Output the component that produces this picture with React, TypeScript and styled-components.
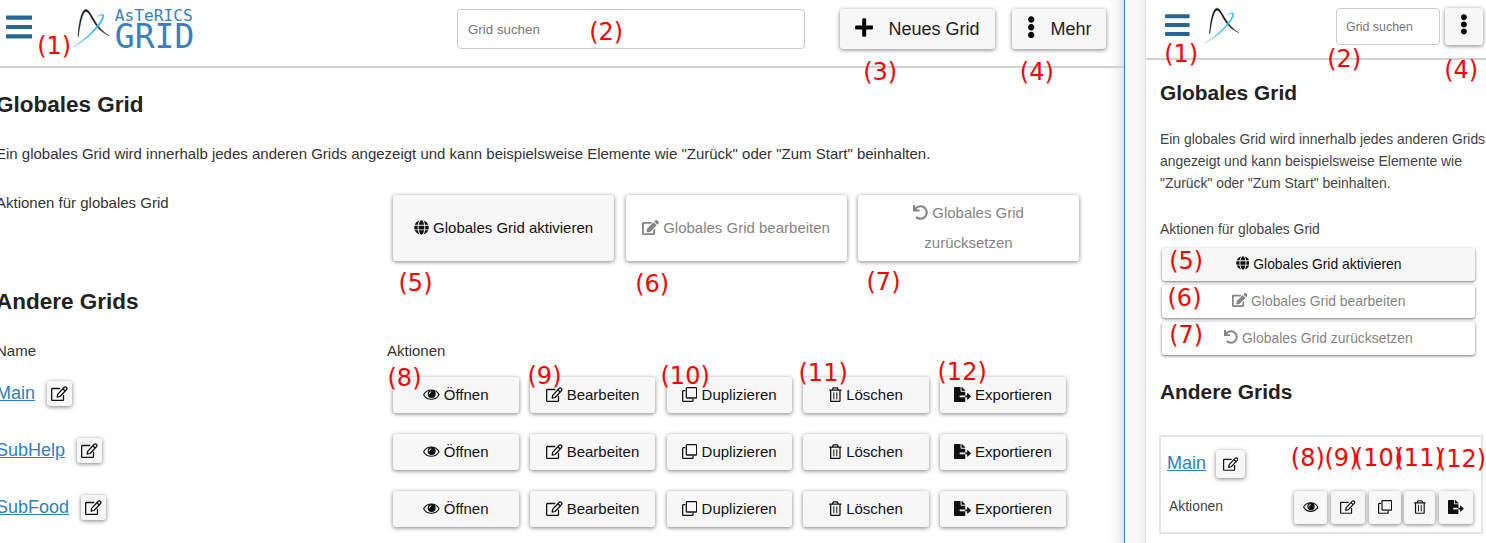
import React from "react";
import styled, { createGlobalStyle } from "styled-components";
import {
  FaBars,
  FaEdit,
  FaEllipsisV,
  FaFileExport,
  FaGlobe,
  FaPlus,
  FaUndo,
} from "react-icons/fa";

const GlobalStyle = createGlobalStyle`
  * { box-sizing: border-box; }
  body {
    margin: 0;
    background: #fff;
    color: #222;
    font-family: "Liberation Sans", Arial, sans-serif;
    overflow: hidden;
  }
`;

const Page = styled.div`
  position: relative;
  display: flex;
  width: 1486px;
  height: 543px;
  overflow: hidden;
`;

const Desktop = styled.section`
  width: 1125px;
  flex: none;
  border-right: 1px solid #1883d7;
  background: linear-gradient(to left, #e2e2e2 0, #f1f1f1 5px, #fbfbfb 10px, #fff 16px);
  overflow: hidden;
  font-size: 15px;
`;

const Gutter = styled.div`
  width: 21px;
  flex: none;
  background: linear-gradient(to right, #fafafa 0, #f8f8f8 12px, #f1f1f1 20px);
  border-right: 1px solid #e0e0e0;
`;

const Mobile = styled.section`
  width: 340px;
  flex: none;
  overflow: hidden;
  font-size: 13.9px;
`;

const Header = styled.header<{ $compact?: boolean }>`
  display: flex;
  align-items: flex-start;
  height: ${(p) => (p.$compact ? 60 : 68)}px;
  padding: ${(p) => (p.$compact ? "8px 3px 0 19.3px" : "9px 18px 0 6.2px")};
  border-bottom: 2px solid #d0d0d0;
`;

const MenuIcon = styled(FaBars)<{ $h: number }>`
  && {
    height: ${(p) => p.$h}px;
    width: ${(p) => p.$h * 0.875}px;
  }
  flex: none;
  color: #266697;
  margin-top: 2.5px;
`;

const PlusIcon = styled(FaPlus)`
  && {
    height: 21px;
    width: 18.4px;
  }
`;

const DotsIcon = styled(FaEllipsisV)<{ $h: number }>`
  && {
    height: ${(p) => p.$h}px;
    width: ${(p) => p.$h * 0.375}px;
  }
`;

const EditIcon = styled(FaEdit)`
  && {
    width: 1.125em;
  }
`;

const ExportIcon = styled(FaFileExport)`
  && {
    width: 1.125em;
  }
`;

const Mark = styled.svg<{ $compact?: boolean }>`
  width: ${(p) => (p.$compact ? 37.5 : 40)}px;
  height: ${(p) => (p.$compact ? 39 : 42)}px;
  margin: ${(p) => (p.$compact ? "-1.6px 0 0 13.4px" : "-1.6px 0 0 38.9px")};
  flex: none;
`;

const Wordmark = styled.div`
  display: flex;
  flex-direction: column;
  margin: -2px 0 0 3.5px;
  width: 82px;
  color: #3a80c1;
  font-family: "DejaVu Sans Mono", monospace;
`;

const WordTop = styled.span`
  font-size: 16.2px;
  line-height: 17px;
`;

const WordBottom = styled.span`
  font-size: 33px;
  line-height: 26px;
`;

const Search = styled.input<{ $compact?: boolean }>`
  width: ${(p) => (p.$compact ? 104 : 348)}px;
  height: ${(p) => (p.$compact ? 37 : 40)}px;
  margin: 0 0 0 auto;
  padding: 0 ${(p) => (p.$compact ? 9 : 10)}px;
  border: 1px solid #ccc;
  border-radius: 4px;
  outline: 0;
  background: #fff;
  font: ${(p) => (p.$compact ? 12.4 : 13.33)}px "Liberation Sans", Arial, sans-serif;
  &::placeholder {
    color: #777;
    opacity: 1;
  }
`;

const Button = styled.button<{ $w: number; $h: number; $off?: boolean }>`
  width: ${(p) => p.$w}px;
  height: ${(p) => p.$h}px;
  flex: none;
  padding: 0;
  border: 0;
  border-radius: 3px;
  background: ${(p) => (p.$off ? "#fff" : "#f7f7f7")};
  color: ${(p) => (p.$off ? "#858585" : "#111")};
  box-shadow: 0 1px 4px rgba(0, 0, 0, 0.5);
  font: inherit;
  line-height: 30px;
  text-align: center;
  svg {
    height: 1em;
    width: auto;
    vertical-align: -0.125em;
  }
`;

const BigButton = styled(Button)`
  padding: 0 15px;
`;

const IconButton = styled(Button)`
  display: flex;
  align-items: center;
  justify-content: center;
`;

const HeaderButton = styled(Button)<{ $ml: number }>`
  display: flex;
  align-items: center;
  justify-content: flex-start;
  gap: 15px;
  margin-left: ${(p) => p.$ml}px;
  padding-left: 15px;
  font-size: 18px;
  color: #222;
  svg {
    color: #000;
    margin-top: -4px;
  }
`;

const MoreButton = styled(IconButton)`
  margin-left: 5px;
  svg {
    color: #000;
    margin-top: -4px;
  }
`;

const Body = styled.main`
  margin-left: -4px;
`;

const Title = styled.h2<{ $h: number; $size: number }>`
  margin: 0;
  height: ${(p) => p.$h}px;
  line-height: ${(p) => p.$h}px;
  font-size: ${(p) => p.$size}px;
  color: #222;
`;

const Intro = styled.p`
  margin: 22px 0 0;
  line-height: 26px;
  white-space: nowrap;
  color: #333;
`;

const Row = styled.div<{ $mt: number; $h: number }>`
  display: grid;
  grid-template-columns: 391px 1fr;
  margin-top: ${(p) => p.$mt}px;
  height: ${(p) => p.$h}px;
`;

const Label = styled.span`
  line-height: 16px;
  color: #333;
`;

const Buttons = styled.div<{ $gap: number }>`
  display: flex;
  gap: ${(p) => p.$gap}px;
  padding-left: 6px;
`;

const NameCell = styled.div`
  display: flex;
  align-items: center;
  height: 33px;
  gap: 12px;
`;

const GridLink = styled.a`
  color: #2d80c4;
  font-size: 18px;
  line-height: 22px;
  margin-top: -2px;
  text-decoration: underline;
`;

const MobileBody = styled.main`
  padding: 0 0 0 14px;
`;

const MobileText = styled.p<{ $mt: number }>`
  margin: ${(p) => p.$mt}px -6px 0 0;
  line-height: 22px;
  color: #444;
  white-space: nowrap;
`;

const Stack = styled.div`
  display: flex;
  flex-direction: column;
  gap: 4px;
  margin: 8px 0 0 2px;
`;

const WideAction = styled(Button)`
  padding-bottom: 2px;
  box-shadow: 0 1px 3px rgba(0, 0, 0, 0.55);
`;

const Card = styled.div`
  width: 324px;
  height: 99px;
  margin: 28px 0 0 -1px;
  border: 2px solid #e5e5e5;
  padding: 13px 0 0 6px;
`;

const CardTop = styled.div`
  display: flex;
  align-items: center;
  gap: 10px;
  height: 28px;
`;

const CardActions = styled.div`
  display: flex;
  align-items: flex-start;
  justify-content: space-between;
  height: 33px;
  margin-top: 12.5px;
  padding: 0 8px 0 2px;
`;

const CardLabel = styled.span`
  line-height: 30px;
  color: #444;
`;

const SmallButtons = styled.div`
  display: flex;
  gap: 3.7px;
`;

const Note = styled.span<{ $x: number; $y: number }>`
  position: absolute;
  left: ${(p) => p.$x - 1.5}px;
  top: ${(p) => p.$y - 20}px;
  font: 24px/24px "DejaVu Sans", sans-serif;
  color: #f00;
  white-space: nowrap;
`;

const LogoMark = ({ compact }: { compact?: boolean }) => (
  <Mark $compact={compact} viewBox="71 7 40 42" preserveAspectRatio="none">
    <path
      d="M78 36.5C78.6 25 81.3 9.4 85.8 9.4C91.5 9.4 94.4 27.5 109.3 35.7C93 29.3 91 11.5 85.9 11.5C82.7 11.5 79.9 24.5 78.4 36.5Z"
      fill="#171717"
      stroke="#171717"
      strokeWidth=".4"
    />
    <path
      d="M73 47C88 37.8 97.5 26.5 101.8 18.5C103.4 15.3 102.2 14.2 97.2 16.6C102 12.8 105.5 13.4 103.4 18.7C99.3 27.8 88 39 73 47Z"
      fill="#35bfec"
      stroke="#35bfec"
      strokeWidth=".3"
    />
  </Mark>
);

const EyeIcon = () => (
  <svg viewBox="0 0 50 45">
    <path
      d="M1.8 23C12 4.5 38 4.5 48.2 23C38 41.5 12 41.5 1.8 23Z"
      fill="none"
      stroke="currentColor"
      strokeWidth="3.4"
    />
    <circle cx="26" cy="21" r="12" fill="currentColor" />
    <path d="M18.5 21.5Q18.5 15 25 14.5" fill="none" stroke="#f7f7f7" strokeWidth="3" />
  </svg>
);

const PenIcon = () => (
  <svg viewBox="0 0 50 45" fill="none" stroke="currentColor" strokeWidth="3.8" strokeLinejoin="round">
    <path d="M28 7.5H4Q2 7.5 2 9.5V41Q2 43 4 43H35.5Q37.5 43 37.5 41V26" />
    <path d="M18.5 33.5L20 25L39 4.5Q42.500 0.8 46 4Q49.500 7.5 46.2 11.2L27 31.5Z" />
    <path d="M35.5 8.5L42.5 15" />
  </svg>
);

const CopyIcon = () => (
  <svg viewBox="0 0 46 45" fill="none" stroke="currentColor" strokeWidth="3.8" strokeLinejoin="round">
    <path d="M15 2H42Q44 2 44 4V31Q44 33 42 33H15Q13 33 13 31V4Q13 2 15 2Z" />
    <path d="M10 11H4Q2 11 2 13V41Q2 43 4 43H31Q33 43 33 41V36" />
  </svg>
);

const TrashIcon = () => (
  <svg viewBox="0 0 38 45" fill="none" stroke="currentColor" strokeWidth="3.8" strokeLinejoin="round">
    <path d="M0.5 9.5H37.5M10 9L13 2.5H25L28 9M5 10V41Q5 43 7 43H31Q33 43 33 41V10" />
    <path d="M14.5 16V37M23.5 16V37" strokeWidth="3" />
  </svg>
);

const rowActions = [
  { icon: <EyeIcon />, label: "Öffnen", small: 33 },
  { icon: <PenIcon />, label: "Bearbeiten", small: 34 },
  { icon: <CopyIcon />, label: "Duplizieren", small: 32 },
  { icon: <TrashIcon />, label: "Löschen", small: 31 },
  { icon: <ExportIcon />, label: "Exportieren", small: 34 },
];

const globalActions = [
  { icon: <FaGlobe />, label: "Globales Grid aktivieren", off: false },
  { icon: <EditIcon />, label: "Globales Grid bearbeiten", off: true },
  { icon: <FaUndo />, label: "Globales Grid zurücksetzen", off: true },
];

const notes: [string, number, number][] = [
  ["(1)", 38.7, 54],
  ["(2)", 590.7, 40],
  ["(3)", 864.7, 80],
  ["(4)", 1021.3, 80],
  ["(5)", 400, 291],
  ["(6)", 636.7, 292],
  ["(7)", 868, 290],
  ["(8)", 389, 386],
  ["(9)", 529, 384],
  ["(10)", 662, 384],
  ["(11)", 800, 381],
  ["(12)", 939, 380],
  ["(1)", 1165.7, 62],
  ["(2)", 1328.7, 67],
  ["(4)", 1445.7, 78],
  ["(5)", 1170.7, 269],
  ["(6)", 1169, 306],
  ["(7)", 1170.7, 343],
  ["(8)", 1292.3, 466],
  ["(9)", 1326, 466],
  ["(10)", 1355.3, 466],
  ["(11)", 1396, 466],
  ["(12)", 1438.3, 467],
];

export default function App() {
  return (
    <Page>
      <GlobalStyle />
      <Desktop>
        <Header>
          <MenuIcon $h={30} />
          <LogoMark />
          <Wordmark>
            <WordTop>AsTeRICS</WordTop>
            <WordBottom>GRID</WordBottom>
          </Wordmark>
          <Search placeholder="Grid suchen" />
          <HeaderButton $w={155} $h={40} $ml={35}>
            <PlusIcon /> Neues Grid
          </HeaderButton>
          <HeaderButton $w={94} $h={40} $ml={17}>
            <DotsIcon $h={22.5} /> Mehr
          </HeaderButton>
        </Header>
        <Body>
          <Row $mt={23} $h={28}>
            <Title $h={28} $size={22.5}>Globales Grid</Title>
          </Row>
          <Intro>
            Ein globales Grid wird innerhalb jedes anderen Grids angezeigt und kann beispielsweise Elemente wie "Zurück" oder "Zum Start" beinhalten.
          </Intro>
          <Row $mt={28} $h={66}>
            <Label>Aktionen für globales Grid</Label>
            <Buttons $gap={11.5}>
              {globalActions.map((a) => (
                <BigButton key={a.label} $w={221} $h={66} $off={a.off}>
                  {a.icon} {a.label}
                </BigButton>
              ))}
            </Buttons>
          </Row>
          <Row $mt={27} $h={28}>
            <Title $h={28} $size={22.5}>Andere Grids</Title>
          </Row>
          <Row $mt={27} $h={16}>
            <Label>Name</Label>
            <Label>Aktionen</Label>
          </Row>
          {["Main", "SubHelp", "SubFood"].map((name, i) => (
            <Row key={name} $mt={i ? 21 : 18} $h={36}>
              <NameCell>
                <GridLink>{name}</GridLink>
                <IconButton $w={25} $h={25}>
                  <PenIcon />
                </IconButton>
              </NameCell>
              <Buttons $gap={11.3}>
                {rowActions.map((a) => (
                  <Button key={a.label} $w={125.5} $h={36}>
                    {a.icon} {a.label}
                  </Button>
                ))}
              </Buttons>
            </Row>
          ))}
        </Body>
      </Desktop>
      <Gutter />
      <Mobile>
        <Header $compact>
          <MenuIcon $h={28.2} />
          <LogoMark compact />
          <Search $compact placeholder="Grid suchen" />
          <MoreButton $w={38} $h={37}>
            <DotsIcon $h={20.8} />
          </MoreButton>
        </Header>
        <MobileBody>
          <Title $h={66} $size={20.9}>Globales Grid</Title>
          <MobileText $mt={2}>
            Ein globales Grid wird innerhalb jedes anderen Grids
            <br />
            angezeigt und kann beispielsweise Elemente wie
            <br />
            "Zurück" oder "Zum Start" beinhalten.
          </MobileText>
          <MobileText $mt={24}>Aktionen für globales Grid</MobileText>
          <Stack>
            {globalActions.map((a) => (
              <WideAction key={a.label} $w={313} $h={33} $off={a.off}>
                {a.icon} {a.label}
              </WideAction>
            ))}
          </Stack>
          <Row $mt={22} $h={30}>
            <Title $h={30} $size={20.9}>Andere Grids</Title>
          </Row>
          <Card>
            <CardTop>
              <GridLink>Main</GridLink>
              <IconButton $w={29} $h={28}>
                <PenIcon />
              </IconButton>
            </CardTop>
            <CardActions>
              <CardLabel>Aktionen</CardLabel>
              <SmallButtons>
                {rowActions.map((a) => (
                  <IconButton key={a.label} $w={a.small} $h={33} aria-label={a.label}>
                    {a.icon}
                  </IconButton>
                ))}
              </SmallButtons>
            </CardActions>
          </Card>
        </MobileBody>
      </Mobile>
      {notes.map(([text, x, y], i) => (
        <Note key={i} $x={x} $y={y}>
          {text}
        </Note>
      ))}
    </Page>
  );
}
